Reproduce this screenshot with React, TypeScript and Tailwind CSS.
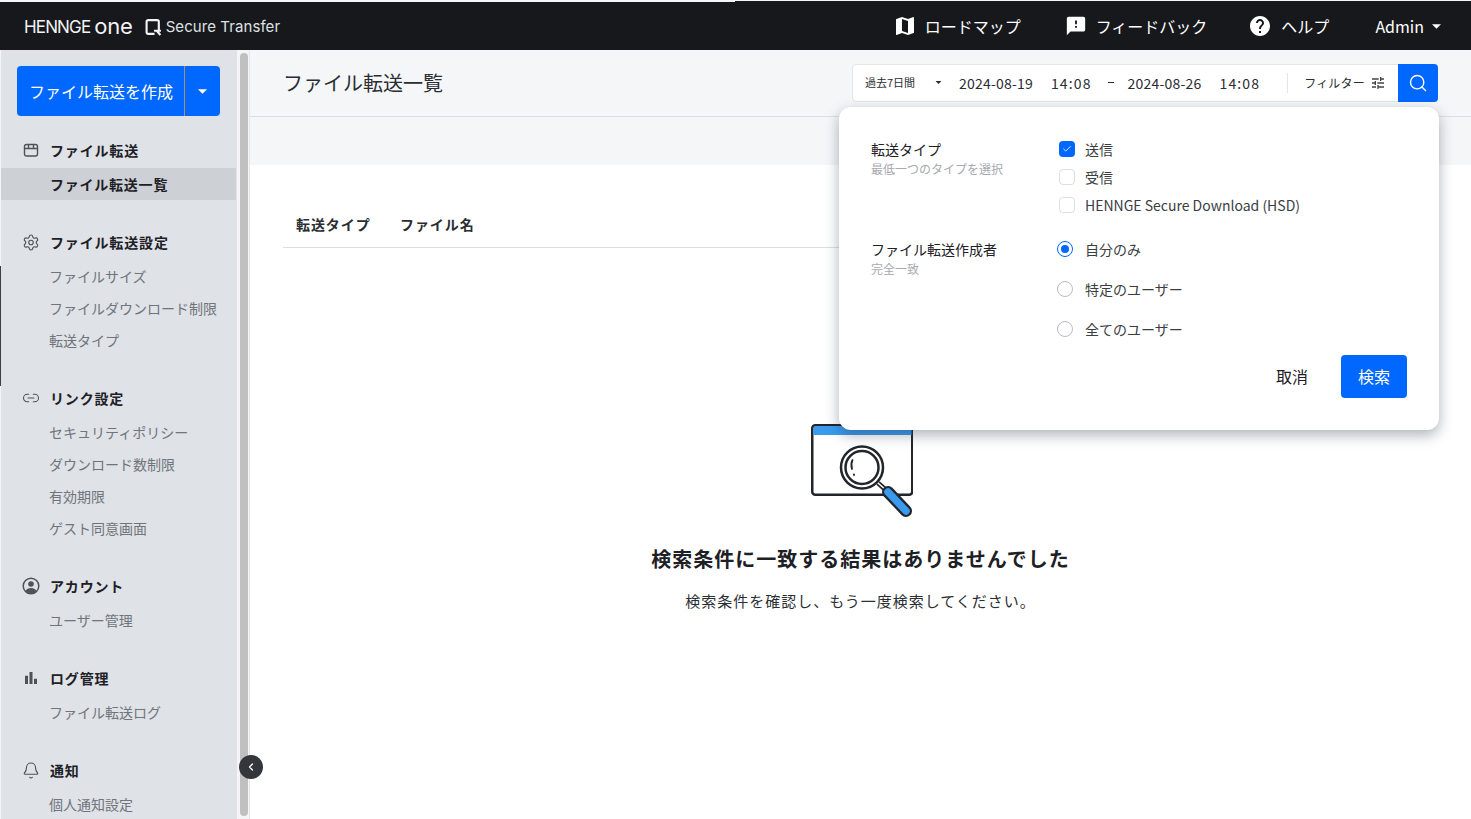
import { Search, Settings, Link2, Bell, ChevronLeft, Check } from 'lucide-react';
import { MdFeedback, MdHelp, MdTune, MdBarChart, MdMap } from 'react-icons/md';

const font = "font-['Noto_Sans_CJK_JP','Noto_Sans',sans-serif]";

function Caret({ className }: { className?: string }) {
  return (
    <svg viewBox="0 0 10 5" className={className} fill="currentColor">
      <path d="M0 0h10L5 5z" />
    </svg>
  );
}

function BoxIcon() {
  return (
    <svg viewBox="0 0 16 16" className="w-4 h-4 text-[#4f5359]" fill="none" stroke="currentColor" strokeWidth="1.4">
      <rect x="1.5" y="2.500" width="13" height="11.500" rx="2" />
      <path d="M1.500 6.500h13M5.500 2.500v4M10.500 2.500v4" />
    </svg>
  );
}

function AccountIcon() {
  return (
    <svg viewBox="0 0 18 18" className="w-[18px] h-[18px] text-[#4f5359]" fill="none">
      <circle cx="9" cy="9" r="7.800" stroke="currentColor" strokeWidth="1.500" />
      <circle cx="9" cy="7" r="2.800" fill="currentColor" />
      <path d="M3.300 14.200C4.500 11.800 6.600 11 9 11s4.500.8 5.700 3.200A7.800 7.800 0 0 1 9 16.800a7.800 7.800 0 0 1-5.700-2.600z" fill="currentColor" />
    </svg>
  );
}

function NavSection({
  icon,
  title,
  items,
  activeItem,
}: {
  icon: React.ReactNode;
  title: string;
  items: string[];
  activeItem?: string;
}) {
  return (
    <div className="mb-6">
      <div className="h-9 pl-[21px] flex items-center">
        <span className="w-[18px] flex justify-center">{icon}</span>
        <span className="ml-[10px] mb-px text-sm font-bold tracking-[0.06em] text-[#1d2025]">{title}</span>
      </div>
      {items.map((item) =>
        item === activeItem ? (
          <div key={item} className="h-8 mr-px pl-[49px] pb-px flex items-center bg-[#cdd0d5] text-sm font-bold tracking-[0.055em] text-[#1d2025]">
            {item}
          </div>
        ) : (
          <div key={item} className="h-8 pl-[48px] pb-px flex items-center text-sm text-[#70747b]">
            {item}
          </div>
        ),
      )}
    </div>
  );
}

function FilterRow({ children, label }: { children: React.ReactNode; label: string }) {
  return (
    <label className="flex items-center text-sm text-[#3a3d42]">
      {children}
      <span className="ml-[10px]">{label}</span>
    </label>
  );
}

function Radio({ checked }: { checked?: boolean }) {
  return checked ? (
    <span className="w-4 h-4 rounded-full border border-[#0068ff] flex items-center justify-center">
      <span className="w-2 h-2 rounded-full bg-[#0068ff]" />
    </span>
  ) : (
    <span className="w-4 h-4 rounded-full border border-[#b9bdc4]" />
  );
}

function FilterPanel() {
  return (
    <div className="absolute top-[57px] right-[32px] w-[600px] h-[323px] bg-white rounded-xl shadow-[0_5px_14px_rgba(40,50,70,0.38)] pt-[29px] pl-8 pr-8">
      <div className="flex h-[101px]">
        <div className="w-[186px]">
          <div className="pt-px text-sm leading-[24px] text-[#1d2025]">転送タイプ</div>
          <div className="mt-px text-xs leading-[14px] text-[#a6a9af]">最低一つのタイプを選択</div>
        </div>
        <div className="flex flex-col pl-[2px] -mt-px">
          {[
            { label: '送信', checked: true },
            { label: '受信', checked: false },
            { label: 'HENNGE Secure Download (HSD)', checked: false },
          ].map((row) => (
            <div key={row.label} className="h-7 flex items-center">
              <FilterRow label={row.label}>
                {row.checked ? (
                  <span className="w-4 h-4 rounded-[4px] bg-[#0068ff] flex items-center justify-center">
                    <Check className="w-[10px] h-[10px] text-white" strokeWidth={2} />
                  </span>
                ) : (
                  <span className="w-4 h-4 rounded-[4px] border border-[#dcdee2]" />
                )}
              </FilterRow>
            </div>
          ))}
        </div>
      </div>
      <div className="flex h-[118px]">
        <div className="w-[186px]">
          <div className="text-sm leading-[24px] text-[#1d2025]">ファイル転送作成者</div>
          <div className="mt-px text-xs leading-[14px] text-[#a6a9af]">完全一致</div>
        </div>
        <div className="flex flex-col -mt-[8px]">
          {[
            { label: '自分のみ', checked: true },
            { label: '特定のユーザー', checked: false },
            { label: '全てのユーザー', checked: false },
          ].map((row) => (
            <div key={row.label} className="h-10 flex items-center">
              <FilterRow label={row.label}>
                <Radio checked={row.checked} />
                <span className="w-[2px]" />
              </FilterRow>
            </div>
          ))}
        </div>
      </div>
      <div className="flex justify-end items-center">
        <button className="pb-[2px] text-base text-[#1d2025] mr-[33px]">取消</button>
        <button className="w-[66px] h-[43px] pb-[2px] rounded bg-[#0068ff] text-base text-white">検索</button>
      </div>
    </div>
  );
}

function EmptyIllustration() {
  return (
    <svg viewBox="0 0 104 96" className="w-[104px] h-[96px]" fill="none">
      <rect x="3.250" y="3.250" width="100" height="69.500" rx="3" fill="#fff" stroke="#22252a" strokeWidth="2.500" />
      <path d="M4.500 6a2 2 0 0 1 2-2h94a2 2 0 0 1 2 2v7h-98z" fill="#3a9bee" />
      <circle cx="53" cy="45.500" r="21" fill="#fff" stroke="#22252a" strokeWidth="2.500" />
      <circle cx="53" cy="45.500" r="16.500" fill="#fff" stroke="#22252a" strokeWidth="2.500" />
      <path d="M43.500 38q-2 4-.5 9" stroke="#22252a" strokeWidth="1.800" strokeLinecap="round" />
      <path d="M45 52.500v.5" stroke="#22252a" strokeWidth="1.800" strokeLinecap="round" />
      <path d="M69 61l9 8" stroke="#22252a" strokeWidth="5" />
      <path d="M69 61l9 8" stroke="#fff" strokeWidth="1.500" />
      <path d="M79 70l18 19" stroke="#22252a" strokeWidth="12" strokeLinecap="round" />
      <path d="M79 70l18 19" stroke="#3a9bee" strokeWidth="7.500" strokeLinecap="round" />
    </svg>
  );
}

export default function App() {
  return (
    <div className={`relative w-[1471px] h-[819px] overflow-hidden flex flex-col bg-white ${font}`}>
      <div className="h-[2px] flex">
        <div className="w-[735px] bg-[#f4f5f6]" />
        <div className="flex-1 bg-[#f4f5f6] border-b border-[#17181c]" />
      </div>
      {/* Top bar */}
      <header className="h-12 bg-[#17181c] flex items-center text-white">
        <div className="ml-6 mt-[2px] flex items-center text-[#f2f3f4]">
          <span className="pt-px font-['Inter',sans-serif] text-[17px] tracking-[-0.05em]">HENNGE</span>
          <span className="ml-[4px] pb-[3px] font-['Inter',sans-serif] text-[22px] leading-none tracking-[-0.01em]">one</span>
          <svg viewBox="0 0 16 16" className="ml-[12px] w-[17px] h-[17px]" fill="none" stroke="currentColor" strokeWidth="2">
            <path d="M9 14H3a1.500 1.500 0 0 1-1.500-1.500v-10A1.500 1.500 0 0 1 3 1h8.500A1.500 1.500 0 0 1 13 2.500V11" />
            <path d="M8.500 11h6.500M11 11l3.500 4" />
          </svg>
          <span className="ml-[4px] text-[15px] font-['Inter',sans-serif] text-[#dfe1e4] tracking-[0.005em]">Secure Transfer</span>
        </div>
        <nav className="ml-auto flex items-center text-base">
          <div className="flex items-center gap-2">
            <MdMap className="w-6 h-6" />
            <span>ロードマップ</span>
          </div>
          <div className="ml-[44px] flex items-center gap-[9px]">
            <MdFeedback className="w-[22px] h-[22px]" />
            <span>フィードバック</span>
          </div>
          <div className="ml-[41px] flex items-center gap-[9px]">
            <MdHelp className="w-6 h-6" />
            <span>ヘルプ</span>
          </div>
          <div className="ml-[46px] mr-[30px] flex items-center gap-2">
            <span>Admin</span>
            <Caret className="w-[9px] h-[5px]" />
          </div>
        </nav>
      </header>

      <div className="flex flex-1 min-h-0">
        <div className="w-px bg-[#f4f5f6] flex flex-col">
          <div className="h-[216px]" />
          <div className="h-[120px] bg-[#3c4046]" />
        </div>
        {/* Sidebar */}
        <aside className="w-[236px] bg-[#dfe2e7] overflow-hidden shrink-0">
          <div className="mx-4 mt-4 h-[50px] w-[203px] rounded bg-[#0068ff] flex items-center text-white">
            <span className="w-[168px] pl-3 text-base whitespace-nowrap border-r border-[#b08e6a] leading-[50px]">ファイル転送を作成</span>
            <span className="flex-1 flex justify-center">
              <Caret className="w-[9px] h-[5px]" />
            </span>
          </div>
          <nav className="mt-4">
            <NavSection icon={<BoxIcon />} title="ファイル転送" items={['ファイル転送一覧']} activeItem="ファイル転送一覧" />
            <NavSection icon={<Settings className="w-[19px] h-[19px] text-[#4f5359]" strokeWidth={1.5} />} title="ファイル転送設定" items={['ファイルサイズ', 'ファイルダウンロード制限', '転送タイプ']} />
            <NavSection icon={<Link2 className="w-5 h-5 text-[#4f5359]" strokeWidth={1.4} />} title="リンク設定" items={['セキュリティポリシー', 'ダウンロード数制限', '有効期限', 'ゲスト同意画面']} />
            <NavSection icon={<AccountIcon />} title="アカウント" items={['ユーザー管理']} />
            <NavSection icon={<MdBarChart className="w-5 h-5 text-[#4f5359]" />} title="ログ管理" items={['ファイル転送ログ']} />
            <NavSection icon={<Bell className="w-[19px] h-[19px] text-[#4f5359]" strokeWidth={1.5} />} title="通知" items={['個人通知設定']} />
          </nav>
        </aside>
        {/* Scrollbar */}
        <div className="w-[13px] bg-[#f4f5f6] border-r border-[#e6e7ea] shrink-0 pl-[3px] pt-[3px] pb-[3px]">
          <div className="w-[8px] h-full rounded-full bg-[#c0c0c0]" />
        </div>

        <main className="relative flex-1 min-w-0 flex flex-col">
          <div className="h-[67px] bg-[#f5f6f8] border-b border-[#dcdee2] flex items-center pl-[33px] pr-[33px]">
            <h1 className="text-xl text-[#2a2d32]">ファイル転送一覧</h1>
            <div className="ml-auto w-[586px] h-[38px] bg-white border border-[#e3e5e8] rounded flex items-center relative -top-[0.5px]">
              <span className="ml-3 text-[11px] text-[#2a2d32] w-[70px]">過去7日間</span>
              <Caret className="w-[7px] h-[3px] text-[#2a2d32]" />
              <span className="ml-[17px] text-sm tracking-[0.015em] text-[#2a2d32]">2024-08-19</span>
              <span className="ml-[18px] text-sm tracking-[0.08em] text-[#2a2d32]">14:08</span>
              <span className="ml-[16px] w-[6px] h-px bg-[#2a2d32]" />
              <span className="ml-[14px] text-sm tracking-[0.015em] text-[#2a2d32]">2024-08-26</span>
              <span className="ml-[18px] text-sm tracking-[0.08em] text-[#2a2d32]">14:08</span>
              <span className="ml-[27px] h-[20px] border-l border-[#e3e5e8]" />
              <span className="ml-4 text-xs tracking-[0.02em] text-[#2a2d32]">フィルター</span>
              <MdTune className="ml-[5px] w-4 h-4 text-[#444]" />
              <button className="ml-auto w-[40px] h-[38px] -mr-px rounded-r bg-[#0068ff] flex items-center justify-center">
                <Search className="w-5 h-5 text-white" strokeWidth={1.7} />
              </button>
            </div>
          </div>
          <div className="h-12 bg-[#f5f6f8]" />
          <div className="mt-[39px] mx-[33px] h-[44px] pb-[4px] border-b border-[#dcdee2] flex items-center pl-[13px] text-sm font-bold tracking-[0.065em] text-[#2a2d32]">
            <span className="w-[104px]">転送タイプ</span>
            <span>ファイル名</span>
          </div>
          <div className="mt-[174px] flex flex-col items-center">
            <EmptyIllustration />
            <h2 className="mt-[26px] text-xl leading-[30px] font-bold tracking-[0.05em] text-[#1d2025]">検索条件に一致する結果はありませんでした</h2>
            <p className="mt-[15px] text-[15px] leading-[24px] tracking-[1px] text-[#2a2d32]">検索条件を確認し、もう一度検索してください。</p>
          </div>
          <FilterPanel />
        </main>
      </div>

      <button className="absolute left-[239px] top-[755px] w-6 h-6 rounded-full bg-[#33363b] flex items-center justify-center">
        <ChevronLeft className="w-3 h-3 text-white" strokeWidth={2.5} />
      </button>
    </div>
  );
}
